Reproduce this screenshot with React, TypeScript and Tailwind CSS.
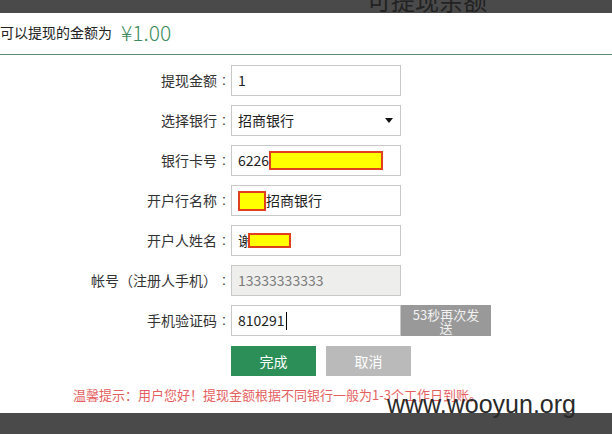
import React from 'react';

const Redact: React.FC<{ className: string }> = ({ className }) => (
  <span className={`inline-block bg-[#ffff00] border-2 border-[#e0401c] ${className}`} />
);

const Row: React.FC<{ label: string; children: React.ReactNode }> = ({ label, children }) => (
  <div className="flex h-[31px] items-center">
    <div className="flex w-[231px] shrink-0 justify-end text-[14px] text-[#333]">
      <span>{label}</span>
      <span className="w-[14px] pl-[5px] font-['Liberation_Sans',sans-serif]">:</span>
    </div>
    {children}
  </div>
);

const Box: React.FC<{ children?: React.ReactNode; disabled?: boolean }> = ({ children, disabled }) => (
  <div
    className={`flex h-[31px] w-[170px] items-center border border-[#c8c8c8] pl-[6px] text-[14px] ${
      disabled ? 'bg-[#eeeeec] text-[#7a7a7a]' : 'bg-white text-[#222]'
    }`}
  >
    {children}
  </div>
);

export default function App() {
  return (
    <div className="relative flex h-[434px] w-[612px] flex-col overflow-hidden bg-white font-['Noto_Sans_CJK_SC',sans-serif]">
      {/* top bar with the cropped page title */}
      <div className="h-[13px] shrink-0 bg-[#4a4a4a]" />
      <div className="absolute left-[367px] top-[-12px] text-[24px] leading-[24px] text-[#222]">可提现余额</div>

      <div className="flex h-[42px] shrink-0 items-center border-b border-[#5f8d75] pb-[2px]">
        <span className="text-[14px] text-[#222]">可以提现的金额为</span>
        <span className="ml-[9px] text-[21px] font-light leading-none text-[#3d8b5e]">¥1.00</span>
      </div>

      <div className="flex flex-col gap-[9px] pt-[10px]">
        <Row label="提现金额">
          <Box>1</Box>
        </Row>
        <Row label="选择银行">
          <Box>
            <span className="flex-1">招商银行</span>
            <svg width="8" height="5" viewBox="0 0 8 5" className="mr-[7px]">
              <path d="M0 0h8L4 5z" fill="#111" />
            </svg>
          </Box>
        </Row>
        <Row label="银行卡号">
          <Box>
            <span>6226</span>
            <Redact className="h-[19px] w-[114px]" />
          </Box>
        </Row>
        <Row label="开户行名称">
          <Box>
            <Redact className="h-[20px] w-[28px]" />
            <span>招商银行</span>
          </Box>
        </Row>
        <Row label="开户人姓名">
          <Box>
            <span>谢</span>
            <Redact className="-ml-[4px] h-[15px] w-[43px]" />
          </Box>
        </Row>
        <Row label="帐号（注册人手机）">
          <Box disabled>13333333333</Box>
        </Row>
        <Row label="手机验证码">
          <Box>
            <span>810291</span>
            <span className="ml-[1px] inline-block h-[18px] w-px bg-black" />
          </Box>
          <div className="flex h-[31px] w-[90px] items-center justify-center bg-[#999] text-center text-[13px] leading-[13px] text-[#f2f2f2]">
            53秒再次发
            <br />送
          </div>
        </Row>

        <div className="flex gap-[10px] pl-[231px] pt-[1px]">
          <button className="h-[30px] w-[85px] bg-[#2d8f58] text-[14px] text-white">完成</button>
          <button className="h-[30px] w-[85px] bg-[#bababa] text-[14px] text-white">取消</button>
        </div>
      </div>

      <p className="pl-[73px] pt-[9px] text-[13px] text-[#e45f5f]">
        温馨提示：用户您好！提现金额根据不同银行一般为1-3个工作日到账。
      </p>

      <div className="mt-auto h-[21px] shrink-0 bg-[#4a4a4a]" />
      {/* watermark */}
      <div className="absolute left-[387px] top-[392px] font-['Liberation_Sans',sans-serif] text-[25px] leading-[25px] text-[#2a2a2a]">
        www.wooyun.org
      </div>
    </div>
  );
}
